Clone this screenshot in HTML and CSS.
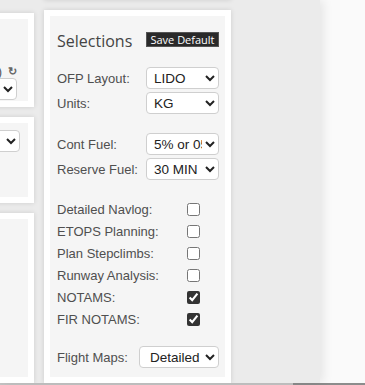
FILE: index.html
```html
<!DOCTYPE html>
<html>
<head>
<meta charset="utf-8">
<link rel="stylesheet" href="styles.css">
</head>
<body>
<div class="page">
  <div class="left-col">
    <div class="card card-a">
      <div class="well well-a">
        <div class="level-row"><span class="level-text">(Auto)</span><span class="refresh">&#x21bb;</span></div>
        <select class="sel sel-a"><option>Auto</option></select>
      </div>
    </div>
    <div class="card card-b">
      <div class="well well-b">
        <select class="sel sel-b"><option>Default</option></select>
      </div>
    </div>
    <div class="card card-c">
      <div class="well"></div>
    </div>
  </div>
  <div class="right-col">
    <div class="card card-top"></div>
    <div class="card card-sel">
      <div class="well well-sel">
        <div class="head">
          <span class="title">Selections</span>
          <button class="save">Save Default</button>
        </div>
        <div class="group">
          <div class="row"><span class="lbl">OFP Layout:</span><select class="sel"><option>LIDO</option></select></div>
          <div class="row"><span class="lbl">Units:</span><select class="sel"><option>KG</option></select></div>
        </div>
        <div class="group">
          <div class="row"><span class="lbl">Cont Fuel:</span><select class="sel"><option>5% or 05 MIN</option></select></div>
          <div class="row"><span class="lbl">Reserve Fuel:</span><select class="sel"><option>30 MIN</option></select></div>
        </div>
        <div class="checks">
          <label class="chk"><span class="lbl">Detailed Navlog:</span><input type="checkbox"></label>
          <label class="chk"><span class="lbl">ETOPS Planning:</span><input type="checkbox"></label>
          <label class="chk"><span class="lbl">Plan Stepclimbs:</span><input type="checkbox"></label>
          <label class="chk"><span class="lbl">Runway Analysis:</span><input type="checkbox"></label>
          <label class="chk"><span class="lbl">NOTAMS:</span><input type="checkbox" checked></label>
          <label class="chk"><span class="lbl">FIR NOTAMS:</span><input type="checkbox" checked></label>
        </div>
        <div class="row maps"><span class="lbl">Flight Maps:</span><select class="sel sel-wide"><option>Detailed</option></select></div>
      </div>
    </div>
  </div>
</div>
<div class="hscroll"><div class="track"></div><div class="thumb"></div></div>
</body>
</html>
```

FILE: styles.css
```css
html, body {
  margin: 0;
  padding: 0;
}
body {
  background: #fafafa;
  width: 365px;
  height: 385px;
  overflow: hidden;
  font-family: "Liberation Sans", Arial, sans-serif;
}
.page {
  width: 320px;
  height: 383px;
  background: #ebebeb;
  display: flex;
  gap: 10px;
  overflow: hidden;
  box-shadow: 3px 0 10px rgba(0, 0, 0, 0.09);
  position: relative;
}
.left-col {
  width: 180px;
  margin-left: -146px;
  padding-top: 13px;
  display: flex;
  flex-direction: column;
  gap: 10px;
  flex: none;
}
.right-col {
  width: 187px;
  margin-top: -40px;
  display: flex;
  flex-direction: column;
  gap: 10px;
  flex: none;
}
.card {
  background: #fff;
  padding: 6px;
  box-shadow: 0 0 5px rgba(0, 0, 0, 0.13);
  box-sizing: border-box;
  display: flex;
  flex-direction: column;
}
.well {
  background: #f5f5f5;
  flex: 1;
}
.card-a { height: 110px; }
.card-b { height: 100px; }
.card-c { height: 200px; }
.card-top { height: 44px; }
.card-sel { height: 420px; }

.well-a {
  display: flex;
  flex-direction: column;
  align-items: flex-end;
  padding: 45px 11px 0 0;
}
.level-row {
  display: flex;
  align-items: center;
  gap: 6px;
  color: #555;
  font-size: 13px;
  height: 14px;
}
.refresh {
  font-size: 11px;
  font-weight: bold;
  color: #666;
}
.sel-a {
  margin-top: 8px;
  margin-right: -3px;
  width: 90px;
}
.well-b {
  display: flex;
  flex-direction: column;
  align-items: flex-end;
  padding: 7px 8px 0 0;
}

.well-sel {
  padding: 14px 6px 0 7px;
}
.head {
  display: flex;
  align-items: center;
  justify-content: space-between;
  height: 22px;
}
.title {
  font-family: "Open Sans", sans-serif;
  font-size: 16px;
  color: #444;
  line-height: 22px;
}
.save {
  font-family: "Open Sans", sans-serif;
  font-size: 11px;
  line-height: 12px;
  height: 15px;
  width: 73px;
  padding: 0;
  color: #fff;
  background: #2a2a2a;
  border: 1px solid #555;
  border-radius: 0;
  margin-bottom: 3px;
}
.group {
  display: flex;
  flex-direction: column;
  gap: 3px;
  margin-top: 15px;
}
.group + .group {
  margin-top: 19px;
}
.row {
  display: flex;
  align-items: center;
  justify-content: space-between;
}
.lbl {
  font-size: 13px;
  color: #4f4f4f;
}
.sel {
  width: 73px;
  height: 22px;
  font-family: "Liberation Sans", Arial, sans-serif;
  font-size: 13.5px;
  color: #222;
  background: #fff;
  border: 1px solid #cfcfcf;
  border-radius: 4px;
  padding: 0 0 0 3px;
  margin: 0;
}
.sel-wide {
  width: 80px;
  padding-left: 6px;
}
.checks {
  margin-top: 18px;
  display: flex;
  flex-direction: column;
}
.chk {
  display: grid;
  grid-template-columns: 130px 13px;
  align-items: center;
  height: 22px;
}
.chk input {
  margin: 0;
  width: 13px;
  height: 13px;
  accent-color: #333;
}
.maps {
  margin-top: 16px;
}
.hscroll {
  display: flex;
  height: 2px;
}
.track {
  width: 293px;
  background: #c4c4c4;
}
.thumb {
  flex: 1;
  background: #8c8c8c;
}
```
